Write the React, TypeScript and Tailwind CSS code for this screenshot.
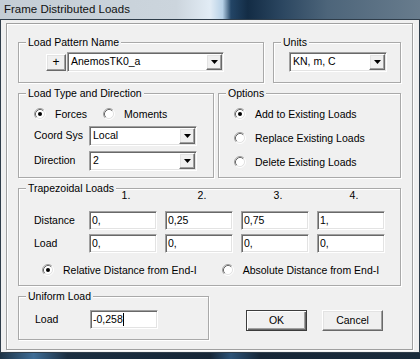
const sunken =
  "bg-white border border-t-[#a0a0a0] border-l-[#a0a0a0] border-r-white border-b-white shadow-[inset_1px_1px_0_#696969,inset_-1px_-1px_0_#e3e3e3]";
const raised =
  "bg-[#f0f0f0] border border-t-white border-l-white border-r-[#696969] border-b-[#696969] shadow-[inset_-1px_-1px_0_#a0a0a0,inset_1px_1px_0_#e3e3e3]";
const group = "m-0 min-w-0 p-0 border border-[#a9a9a9] shadow-[inset_1px_1px_0_#fff,1px_1px_0_#fff]";

const Legend = ({ children }: { children: React.ReactNode }) => (
  <legend className="ml-[7px] bg-[#f0f0f0] px-[2px] leading-[13px]">{children}</legend>
);

const Arrow = () => (
  <svg width="7" height="4" viewBox="0 0 7 4">
    <polygon points="0,0 7,0 3.5,4" fill="#000" />
  </svg>
);

const Combo = ({ value, className }: { value: string; className: string }) => (
  <div className={`flex h-[20px] items-center p-px ${sunken} ${className}`}>
    <span className="flex-1 truncate pl-[2px]">{value}</span>
    <span className={`flex h-full w-[16px] items-center justify-center ${raised}`}>
      <Arrow />
    </span>
  </div>
);

const Field = ({ value, caret }: { value: string; caret?: boolean }) => (
  <div className={`flex h-[19px] items-center pl-[2px] ${sunken}`}>
    {value}
    {caret && <span className="h-[13px] w-px bg-black" />}
  </div>
);

const RadioIcon = ({ checked }: { checked?: boolean }) => (
  <svg width="12" height="12" viewBox="0 0 12 12" className="shrink-0">
    <circle cx="6" cy="6" r="4.5" fill="#fff" />
    <path d="M2.11 9.89A5.5 5.5 0 0 1 9.89 2.11" fill="none" stroke="#a0a0a0" />
    <path d="M9.89 2.11A5.5 5.5 0 0 1 2.11 9.89" fill="none" stroke="#fff" />
    <path d="M2.82 9.18A4.5 4.5 0 0 1 9.18 2.82" fill="none" stroke="#696969" />
    <path d="M9.18 2.82A4.5 4.5 0 0 1 2.82 9.18" fill="none" stroke="#e3e3e3" />
    {checked && <circle cx="6" cy="6" r="2" fill="#000" />}
  </svg>
);

const Radio = ({ label, checked }: { label: string; checked?: boolean }) => (
  <div className="flex h-[12px] items-center gap-[9px]">
    <RadioIcon checked={checked} />
    <span className="leading-[13px]">{label}</span>
  </div>
);

export default function App() {
  return (
    <div className="h-[359px] w-[420px] overflow-hidden bg-[linear-gradient(90deg,#1e3346_0%,#3f6d96_8%,#1b2e40_16%,#162636_50%,#2d5377_55%,#162636_62%,#1a2b3b_100%)] font-['Liberation_Sans',Arial,sans-serif] text-[10.5px] text-black">
      <div className="flex h-[353px] flex-col">
        <div className="flex h-[19px] shrink-0 items-center bg-[linear-gradient(90deg,#c4cdd5_0%,#ccd5dd_42%,#e2ecf5_50%,#b6d0e6_53%,#234566_55%,#132c45_59%,#2b4660_67%,#4d657a_78%,#687c8d_100%)] pl-[4px] text-[11.5px] text-[#111]">
          Frame Distributed Loads
        </div>
        <div className="flex-1 border border-[#2f3d4a] bg-[#f0f0f0] pt-[3px]">
          <div className="ml-[5px] mr-[6px] flex flex-col gap-[4px] border border-[#a0a0a0] px-[11px] pb-[9px] pt-[12px] shadow-[1px_1px_0_#fff,inset_1px_1px_0_#fff]">
            {/* pattern + units */}
            <div className="flex gap-[9px]">
              <fieldset className={`${group} h-[47px] w-[246px]`}>
                <Legend>Load Pattern Name</Legend>
                <div className="flex items-center gap-[1px] pl-[27px] pt-[3px]">
                  <button className={`${raised} flex h-[17px] w-[20px] items-center justify-center text-[12px] leading-none`}>+</button>
                  <Combo value="AnemosTK0_a" className="w-[157px]" />
                </div>
              </fieldset>
              <fieldset className={`${group} h-[47px] w-[128px]`}>
                <Legend>Units</Legend>
                <div className="pl-[15px] pt-[3px]">
                  <Combo value="KN, m, C" className="w-[98px]" />
                </div>
              </fieldset>
            </div>

            {/* type + options */}
            <div className="flex gap-[4px]">
              <fieldset className={`${group} h-[91px] w-[196px]`}>
                <Legend>Load Type and Direction</Legend>
                <div className="flex flex-col pl-[15px] pt-[8px]">
                  <div className="flex gap-[16px]">
                    <Radio label="Forces" checked />
                    <Radio label="Moments" />
                  </div>
                  <div className="mt-[6px] flex flex-col gap-[5px]">
                    <div className="flex items-center">
                      <span className="w-[55px]">Coord Sys</span>
                      <Combo value="Local" className="w-[108px]" />
                    </div>
                    <div className="flex items-center">
                      <span className="w-[55px]">Direction</span>
                      <Combo value="2" className="w-[108px]" />
                    </div>
                  </div>
                </div>
              </fieldset>
              <fieldset className={`${group} h-[91px] w-[183px]`}>
                <Legend>Options</Legend>
                <div className="flex flex-col gap-[12px] pl-[15px] pt-[8px]">
                  <Radio label="Add to Existing Loads" checked />
                  <Radio label="Replace Existing Loads" />
                  <Radio label="Delete Existing Loads" />
                </div>
              </fieldset>
            </div>

            {/* trapezoidal */}
            <fieldset className={`${group} h-[104px] w-[383px]`}>
              <Legend>Trapezoidal Loads</Legend>
              <div className="pl-[15px]">
                <div className="mt-[-6px] grid grid-cols-[47px_68px_68px_68px_68px] gap-x-[8px] leading-[13px]">
                  <span />
                  {["1.", "2.", "3.", "4."].map((n) => (
                    <span key={n} className="pl-[6px] text-center">{n}</span>
                  ))}
                </div>
                <div className="mt-[9px] grid grid-cols-[47px_68px_68px_68px_68px] items-center gap-x-[8px] gap-y-[4px]">
                  <span>Distance</span>
                  <Field value="0," />
                  <Field value="0,25" />
                  <Field value="0,75" />
                  <Field value="1," />
                  <span>Load</span>
                  <Field value="0," />
                  <Field value="0," />
                  <Field value="0," />
                  <Field value="0," />
                </div>
                <div className="mt-[11px] flex gap-[25px] pl-[8px]">
                  <Radio label="Relative Distance from End-I" checked />
                  <Radio label="Absolute Distance from End-I" />
                </div>
              </div>
            </fieldset>

            {/* uniform + buttons */}
            <div className="flex">
              <fieldset className={`${group} h-[50px] w-[191px]`}>
                <Legend>Uniform Load</Legend>
                <div className="flex items-center pl-[16px] pt-[7px]">
                  <span className="w-[55px]">Load</span>
                  <div className="w-[68px]">
                    <Field value="-0,258" caret />
                  </div>
                </div>
              </fieldset>
              <div className="ml-[37px] flex gap-[15px] pt-[20px]">
                <button className="h-[21px] w-[61px] border border-[#3c3c3c] bg-[#f0f0f0] shadow-[inset_1px_1px_0_#fff,inset_-1px_-1px_0_#696969,inset_-2px_-2px_0_#a0a0a0]">
                  OK
                </button>
                <button className={`${raised} h-[21px] w-[61px]`}>Cancel</button>
              </div>
            </div>
          </div>
        </div>
      </div>
    </div>
  );
}
